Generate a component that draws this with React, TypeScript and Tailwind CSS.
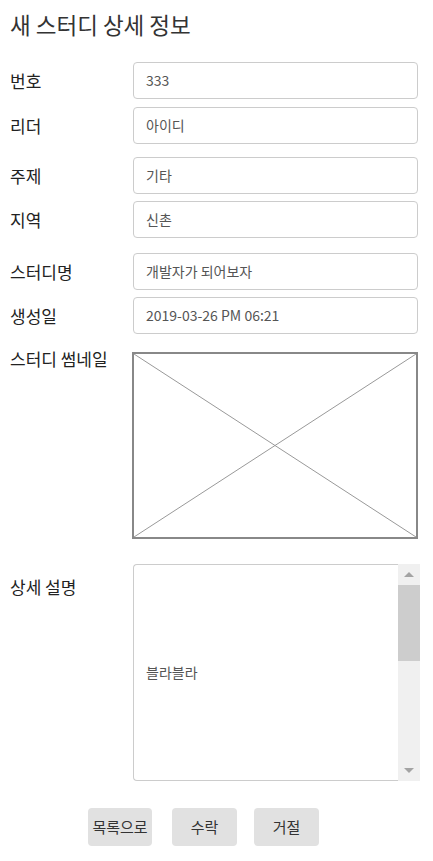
import React from "react";

const font = { fontFamily: '"Noto Sans CJK KR", "Noto Sans", sans-serif' };

function Field({ label, value, mt }: { label: string; value: string; mt: string }) {
  return (
    <div className={`flex items-center ${mt}`}>
      <div className="w-[123px] text-[17px] leading-[24px] text-[#222]">{label}</div>
      <div className="w-[285px] h-[37px] border border-[#cccccc] rounded-[4px] flex items-center pl-[12px] text-[14px] text-[#555]">
        {value}
      </div>
    </div>
  );
}

export default function App() {
  return (
    <div className="w-[433px] min-h-[861px] bg-white px-[10px] pt-[6px]" style={font}>
      <h1 className="text-[22.5px] leading-[36px] text-[#333] font-normal">새 스터디 상세 정보</h1>

      <Field label="번호" value="333" mt="mt-[20px]" />
      <Field label="리더" value="아이디" mt="mt-[8px]" />
      <Field label="주제" value="기타" mt="mt-[13px]" />
      <Field label="지역" value="신촌" mt="mt-[7px]" />
      <Field label="스터디명" value="개발자가 되어보자" mt="mt-[15px]" />
      <Field label="생성일" value="2019-03-26 PM 06:21" mt="mt-[7px]" />

      <div className="flex items-start mt-[18px]">
        <div className="w-[122px] text-[17px] leading-[24px] text-[#222] mt-[-5px]">스터디 썸네일</div>
        <div className="w-[286px] h-[187px] border-2 border-[#888888] bg-white">
          <svg width="100%" height="100%" viewBox="0 0 282 183" preserveAspectRatio="none">
            <line x1="0" y1="0" x2="282" y2="183" stroke="#999" strokeWidth="1" />
            <line x1="282" y1="0" x2="0" y2="183" stroke="#999" strokeWidth="1" />
          </svg>
        </div>
      </div>

      <div className="flex items-start mt-[25px]">
        <div className="w-[123px] text-[17px] leading-[24px] text-[#222] mt-[11px]">상세 설명</div>
        <div className="w-[287px] h-[217px] flex">
          <div className="flex-1 border-l border-t border-b border-[#cccccc] rounded-l-[4px] flex items-center pl-[12px] text-[14px] text-[#555]">
            블라블라
          </div>
          <div className="w-[22px] h-full bg-[#f0f0f0] flex flex-col">
            <div className="h-[21px] flex items-center justify-center">
              <svg width="10" height="6" viewBox="0 0 10 6">
                <polygon points="5,0 10,5 0,5" fill="#a3a3a3" />
              </svg>
            </div>
            <div className="h-[76px] bg-[#cdcdcd]" />
            <div className="flex-1" />
            <div className="h-[21px] flex items-center justify-center">
              <svg width="10" height="6" viewBox="0 0 10 6">
                <polygon points="0,0 10,0 5,5" fill="#a3a3a3" />
              </svg>
            </div>
          </div>
        </div>
      </div>

      <div className="flex mt-[27px] ml-[78px]">
        <button className="w-[64px] h-[38px] bg-[#e1e1e1] rounded-[4px] text-[15px] text-[#333]">목록으로</button>
        <button className="w-[65px] h-[38px] bg-[#e1e1e1] rounded-[4px] text-[15px] text-[#333] ml-[20px]">수락</button>
        <button className="w-[65px] h-[38px] bg-[#e1e1e1] rounded-[4px] text-[15px] text-[#333] ml-[17px]">거절</button>
      </div>
    </div>
  );
}
